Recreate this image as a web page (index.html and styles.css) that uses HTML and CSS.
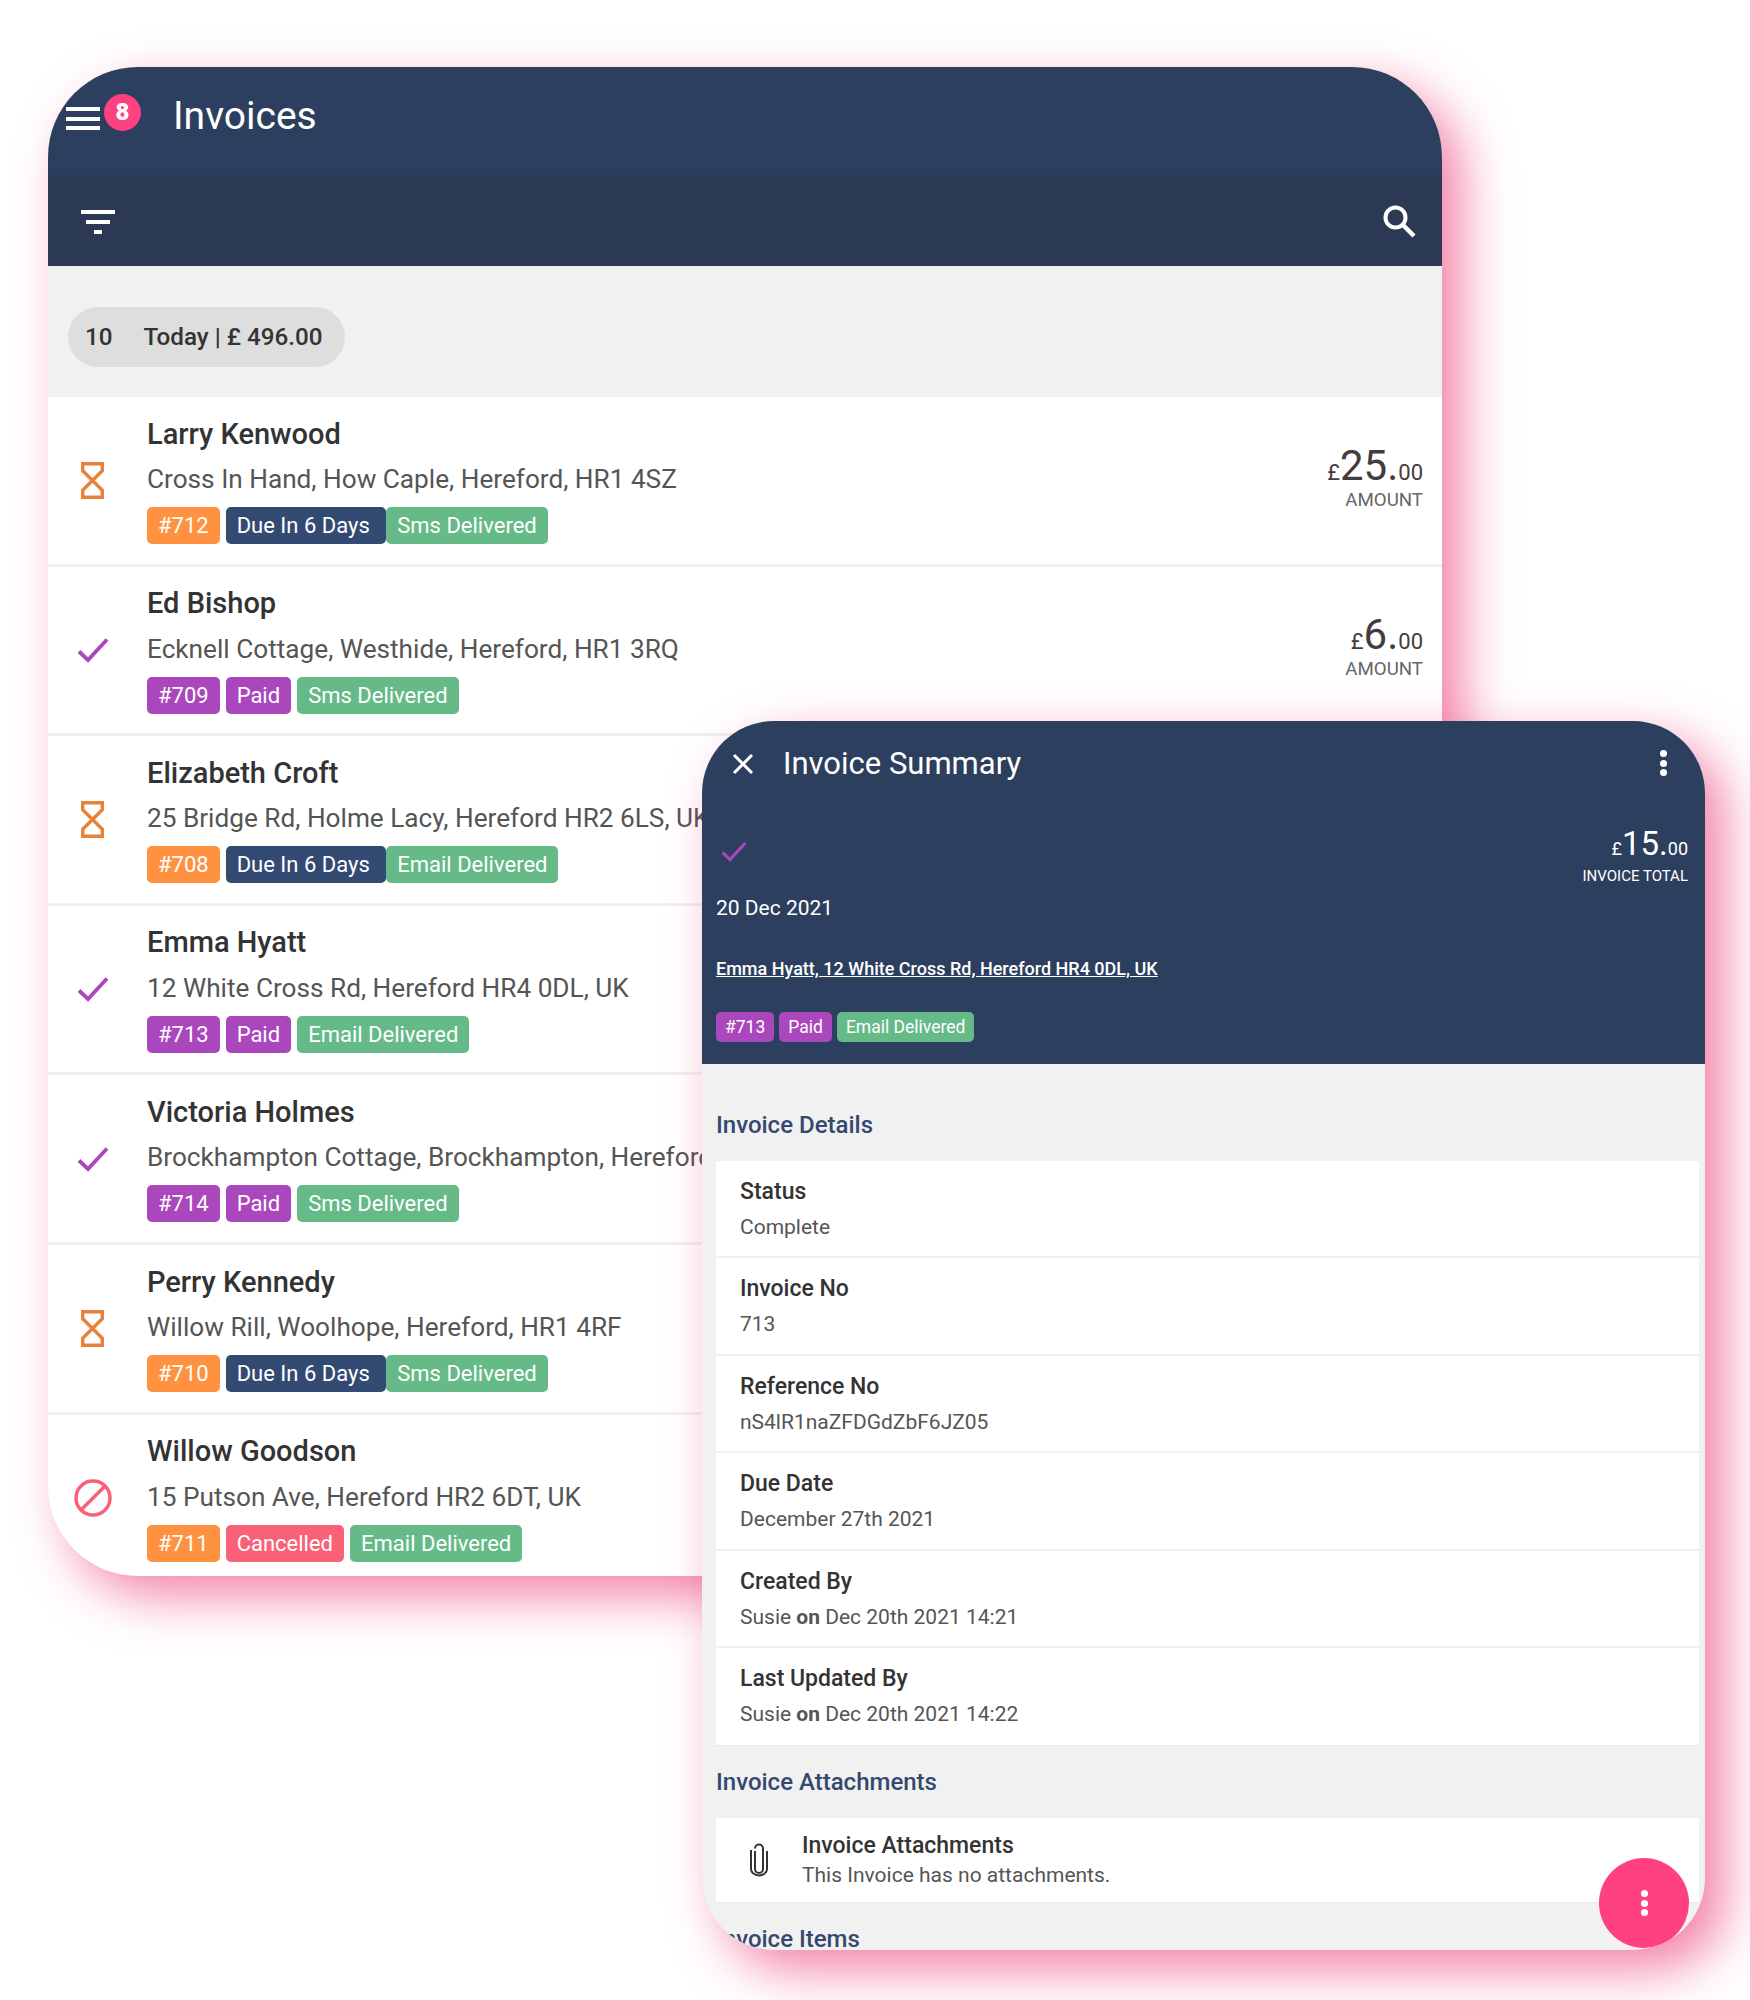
FILE: index.html
```html
<!DOCTYPE html>
<html lang="en">
<head>
    <meta charset="UTF-8">
    <meta name="viewport" content="width=device-width, initial-scale=1.0">
    <title>Invoices</title>
    <link rel="stylesheet" href="styles.css">
</head>
<body>
    <svg class="defs" width="0" height="0">
        <symbol id="hourglass" viewBox="0 0 23 37">
            <path d="M1.700 1.700h19.600v7l-19.600 19.600v7h19.600v-7L1.700 8.700z" fill="none" stroke="currentColor" stroke-width="3.400"/>
        </symbol>
        <symbol id="check" viewBox="0 0 32 26">
            <path d="M2 14.500 11 23 30 2.500" fill="none" stroke="currentColor" stroke-width="3.800"/>
        </symbol>
        <symbol id="cancel" viewBox="0 0 38 38">
            <circle cx="19" cy="19" r="17" fill="none" stroke="currentColor" stroke-width="3.500"/>
            <path d="M7 31 31 7" fill="none" stroke="currentColor" stroke-width="3.500"/>
        </symbol>
    </svg>

    <div class="canvas">
        <div class="window list-window">
            <div class="appbar">
                <div class="menu-icon"><span></span><span></span><span></span></div>
                <div class="count-badge">8</div>
                <h1>Invoices</h1>
            </div>
            <div class="toolbar">
                <div class="filter-icon"><span></span><span></span><span></span></div>
                <svg class="search-icon" viewBox="0 0 34 34" width="34" height="34">
                    <circle cx="13.500" cy="13.500" r="10" fill="none" stroke="#fff" stroke-width="4"/>
                    <path d="M21 21 32 32" fill="none" stroke="#fff" stroke-width="4.500"/>
                </svg>
            </div>
            <div class="summary">
                <div class="pill"><span>10</span><span>Today | £ 496.00</span></div>
            </div>

            <div class="row">
                <div class="status-cell"><svg class="status orange"><use href="#hourglass"/></svg></div>
                <div class="row-text">
                    <div class="name">Larry Kenwood</div>
                    <div class="address">Cross In Hand, How Caple, Hereford, HR1 4SZ</div>
                    <div class="tags">
                        <span class="tag bg-orange">#712</span>
                        <span class="tag bg-navy joined">Due In 6 Days</span>
                        <span class="tag bg-green">Sms Delivered</span>
                    </div>
                </div>
                <div class="amount">
                    <div class="price"><small>£</small>25.<small>00</small></div>
                    <div class="amount-label">AMOUNT</div>
                </div>
            </div>

            <div class="row">
                <div class="status-cell"><svg class="status tick purple"><use href="#check"/></svg></div>
                <div class="row-text">
                    <div class="name">Ed Bishop</div>
                    <div class="address">Ecknell Cottage, Westhide, Hereford, HR1 3RQ</div>
                    <div class="tags">
                        <span class="tag bg-purple">#709</span>
                        <span class="tag bg-purple">Paid</span>
                        <span class="tag bg-green">Sms Delivered</span>
                    </div>
                </div>
                <div class="amount">
                    <div class="price"><small>£</small>6.<small>00</small></div>
                    <div class="amount-label">AMOUNT</div>
                </div>
            </div>

            <div class="row">
                <div class="status-cell"><svg class="status orange"><use href="#hourglass"/></svg></div>
                <div class="row-text">
                    <div class="name">Elizabeth Croft</div>
                    <div class="address">25 Bridge Rd, Holme Lacy, Hereford HR2 6LS, UK</div>
                    <div class="tags">
                        <span class="tag bg-orange">#708</span>
                        <span class="tag bg-navy joined">Due In 6 Days</span>
                        <span class="tag bg-green">Email Delivered</span>
                    </div>
                </div>
            </div>

            <div class="row">
                <div class="status-cell"><svg class="status tick purple"><use href="#check"/></svg></div>
                <div class="row-text">
                    <div class="name">Emma Hyatt</div>
                    <div class="address">12 White Cross Rd, Hereford HR4 0DL, UK</div>
                    <div class="tags">
                        <span class="tag bg-purple">#713</span>
                        <span class="tag bg-purple">Paid</span>
                        <span class="tag bg-green">Email Delivered</span>
                    </div>
                </div>
            </div>

            <div class="row">
                <div class="status-cell"><svg class="status tick purple"><use href="#check"/></svg></div>
                <div class="row-text">
                    <div class="name">Victoria Holmes</div>
                    <div class="address">Brockhampton Cottage, Brockhampton, Hereford</div>
                    <div class="tags">
                        <span class="tag bg-purple">#714</span>
                        <span class="tag bg-purple">Paid</span>
                        <span class="tag bg-green">Sms Delivered</span>
                    </div>
                </div>
            </div>

            <div class="row">
                <div class="status-cell"><svg class="status orange"><use href="#hourglass"/></svg></div>
                <div class="row-text">
                    <div class="name">Perry Kennedy</div>
                    <div class="address">Willow Rill, Woolhope, Hereford, HR1 4RF</div>
                    <div class="tags">
                        <span class="tag bg-orange">#710</span>
                        <span class="tag bg-navy joined">Due In 6 Days</span>
                        <span class="tag bg-green">Sms Delivered</span>
                    </div>
                </div>
            </div>

            <div class="row">
                <div class="status-cell"><svg class="status circle red"><use href="#cancel"/></svg></div>
                <div class="row-text">
                    <div class="name">Willow Goodson</div>
                    <div class="address">15 Putson Ave, Hereford HR2 6DT, UK</div>
                    <div class="tags">
                        <span class="tag bg-orange">#711</span>
                        <span class="tag bg-red">Cancelled</span>
                        <span class="tag bg-green">Email Delivered</span>
                    </div>
                </div>
            </div>
        </div>

        <div class="window summary-window">
            <div class="summary-head">
                <div class="summary-bar">
                    <svg class="close-icon" viewBox="0 0 22 22" width="22" height="22">
                        <path d="M2 2 20 20M20 2 2 20" fill="none" stroke="#fff" stroke-width="3"/>
                    </svg>
                    <h2>Invoice Summary</h2>
                    <div class="dots"><span></span><span></span><span></span></div>
                </div>
                <div class="total-line">
                    <svg class="head-tick purple"><use href="#check"/></svg>
                    <div class="total">
                        <div class="price"><small>£</small>15.<small>00</small></div>
                        <div class="total-label">INVOICE TOTAL</div>
                    </div>
                </div>
                <div class="head-date">20 Dec 2021</div>
                <a class="head-link">Emma Hyatt, 12 White Cross Rd, Hereford HR4 0DL, UK</a>
                <div class="tags small-tags">
                    <span class="tag bg-purple">#713</span>
                    <span class="tag bg-purple">Paid</span>
                    <span class="tag bg-green">Email Delivered</span>
                </div>
            </div>

            <div class="summary-body">
                <h3 class="first-heading">Invoice Details</h3>
                <div class="panel">
                    <div class="detail">
                        <div class="detail-label">Status</div>
                        <div class="detail-value">Complete</div>
                    </div>
                    <div class="detail">
                        <div class="detail-label">Invoice No</div>
                        <div class="detail-value">713</div>
                    </div>
                    <div class="detail">
                        <div class="detail-label">Reference No</div>
                        <div class="detail-value">nS4lR1naZFDGdZbF6JZ05</div>
                    </div>
                    <div class="detail">
                        <div class="detail-label">Due Date</div>
                        <div class="detail-value">December 27th 2021</div>
                    </div>
                    <div class="detail">
                        <div class="detail-label">Created By</div>
                        <div class="detail-value">Susie <b>on</b> Dec 20th 2021 14:21</div>
                    </div>
                    <div class="detail">
                        <div class="detail-label">Last Updated By</div>
                        <div class="detail-value">Susie <b>on</b> Dec 20th 2021 14:22</div>
                    </div>
                </div>

                <h3>Invoice Attachments</h3>
                <div class="panel attachment">
                    <svg class="clip-icon" viewBox="0 0 20 34" width="20" height="34">
                        <path d="M6 8v18a4 4 0 0 0 8 0V5.500a4 4 0 0 0-8 0M2 7v19a8 6.500 0 0 0 16 0V8" fill="none" stroke="#333" stroke-width="2"/>
                    </svg>
                    <div>
                        <div class="detail-label">Invoice Attachments</div>
                        <div class="attachment-note">This Invoice has no attachments.</div>
                    </div>
                </div>

                <h3>Invoice Items</h3>
            </div>

            <div class="fab"><div class="dots"><span></span><span></span><span></span></div></div>
        </div>
    </div>
</body>
</html>
```

FILE: styles.css
```css
* {
    box-sizing: border-box;
}
body {
    margin: 0;
    background: #fff;
    font-family: Roboto, Arial, sans-serif;
    color: #333;
}
.defs {
    display: block;
    height: 0;
}
.canvas {
    position: relative;
    height: 2000px;
    overflow: hidden;
}
.window {
    position: absolute;
    overflow: hidden;
    background: #fff;
    box-shadow: 20px 20px 50px rgba(236, 64, 122, 0.65);
}
.list-window {
    left: 48px;
    top: 67px;
    width: 1394px;
    height: 1509px;
    border-radius: 90px;
}
.summary-window {
    left: 702px;
    top: 721px;
    width: 1003px;
    height: 1229px;
    border-radius: 72px;
    background: #f1f1f1;
}

/* list window */
.appbar {
    height: 108px;
    background: #2d3f5e;
    display: flex;
    align-items: center;
    padding-left: 18px;
    color: #fff;
}
.appbar h1 {
    margin: -10px 0 0 32px;
    font-size: 39px;
    font-weight: 400;
}
.menu-icon {
    width: 34px;
    display: flex;
    flex-direction: column;
    gap: 5.500px;
    margin-top: -5px;
}
.menu-icon span, .filter-icon span {
    display: block;
    height: 4px;
    background: #fff;
}
.count-badge {
    width: 37px;
    height: 37px;
    margin: -17px 0 0 4px;
    border-radius: 50%;
    background: #ff4081;
    color: #fff;
    font-size: 24px;
    font-weight: 900;
    line-height: 37px;
    text-align: center;
}
.toolbar {
    height: 91px;
    background: #2b3955;
    display: flex;
    align-items: center;
    justify-content: space-between;
    padding: 0 26px 0 33px;
}
.filter-icon {
    width: 34px;
    display: flex;
    flex-direction: column;
    align-items: center;
    gap: 6px;
    margin-top: 3px;
}
.filter-icon span:nth-child(1) { width: 34px; }
.filter-icon span:nth-child(2) { width: 24px; }
.filter-icon span:nth-child(3) { width: 8px; }
.summary {
    height: 131px;
    background: #f1f1f1;
    padding: 41px 0 0 20px;
}
.pill {
    display: inline-flex;
    align-items: center;
    gap: 31px;
    height: 60px;
    padding: 0 23px 0 17px;
    border-radius: 30px;
    background: #dedede;
    font-size: 24.200px;
    font-weight: 500;
}
.row {
    height: 169.600px;
    border-bottom: 3px solid #f0f0f0;
    display: flex;
    align-items: center;
    padding-right: 19px;
}
.status-cell {
    flex: none;
    width: 99px;
    display: flex;
    justify-content: center;
    padding-right: 10px;
}
.status {
    width: 23px;
    height: 37px;
}
.status.tick {
    width: 32px;
    height: 26px;
}
.status.circle {
    width: 38px;
    height: 38px;
}
.orange { color: #e8823a; }
.purple { color: #ab47bc; }
.red { color: #f96177; }
.row-text {
    flex: 1;
    margin-bottom: 3px;
    white-space: nowrap;
}
.name {
    font-size: 29px;
    font-weight: 500;
    line-height: 40px;
}
.address {
    margin-top: 5.500px;
    font-size: 26.200px;
    line-height: 40px;
    color: #555;
}
.tags {
    display: flex;
    gap: 6px;
    margin-top: 8px;
}
.tag {
    height: 37px;
    padding: 0 11px;
    border-radius: 5px;
    color: #fff;
    font-size: 22px;
    line-height: 37px;
}
.tag.joined {
    margin-right: -6px;
    padding-right: 16.500px;
}
.bg-orange { background: #ff9240; }
.bg-navy { background: #334a72; }
.bg-green { background: #65ba87; }
.bg-purple { background: #ab47bc; }
.bg-red { background: #f96177; }
.amount {
    margin-bottom: 7.500px;
    text-align: right;
    white-space: nowrap;
}
.price {
    color: #443c3c;
    font-size: 42px;
    line-height: 42px;
}
.price small {
    font-size: 22px;
}
.amount-label {
    margin-top: -3px;
    color: #666;
    font-size: 18.700px;
    line-height: 18px;
}

/* summary window */
.summary-head {
    height: 343px;
    background: #2d3f5e;
    color: #fff;
    padding: 0 14px;
}
.summary-bar {
    display: flex;
    align-items: center;
    height: 84px;
    padding-left: 16px;
}
.close-icon {
    margin-top: 2px;
}
.summary-bar h2 {
    flex: 1;
    margin: 0 0 0 29px;
    font-size: 31px;
    font-weight: 400;
}
.dots {
    display: flex;
    flex-direction: column;
    gap: 2.500px;
}
.dots span {
    display: block;
    width: 7px;
    height: 7px;
    border-radius: 50%;
    background: #fff;
}
.summary-bar .dots {
    margin-right: 24px;
}
.total-line {
    display: flex;
    justify-content: space-between;
    align-items: flex-start;
    height: 78px;
    padding-right: 3px;
}
.head-tick {
    width: 28px;
    height: 21px;
    margin: 36px 0 0 4px;
}
.total {
    text-align: right;
    margin-top: 21px;
}
.total .price {
    color: #fff;
    font-size: 33px;
    line-height: 36px;
}
.total .price small {
    font-size: 18px;
}
.total-label {
    margin-top: -1px;
    font-size: 15px;
    line-height: 20px;
}
.head-date {
    margin-top: 10px;
    font-size: 21px;
    line-height: 30px;
}
.head-link {
    display: block;
    margin-top: 31px;
    color: #fff;
    font-size: 18px;
    font-weight: 500;
    line-height: 30px;
    text-decoration: underline;
}
.small-tags {
    gap: 5px;
    margin-top: 28px;
}
.small-tags .tag {
    height: 30px;
    padding: 0 9px;
    font-size: 17.500px;
    line-height: 30px;
}
.summary-body {
    padding: 0 6px 0 14px;
}
.summary-body h3 {
    margin: 0;
    height: 73px;
    color: #34496f;
    font-size: 24px;
    font-weight: 500;
    line-height: 75px;
}
.summary-body h3.first-heading {
    height: 97px;
    line-height: 122px;
}
.panel {
    background: #fff;
    box-shadow: 0 1px 1px rgba(0, 0, 0, 0.03);
}
.detail {
    height: 97.400px;
    padding: 16px 24px 0;
    border-bottom: 2px solid #f0f0f0;
}
.detail:last-child {
    border-bottom: 0;
}
.detail-label {
    font-size: 23px;
    font-weight: 500;
    line-height: 30px;
}
.detail-value {
    margin-top: 5px;
    color: #555;
    font-size: 21px;
    line-height: 30px;
}
.attachment {
    display: flex;
    align-items: center;
    height: 84px;
    padding-left: 33px;
    gap: 33px;
}
.attachment .detail-label {
    margin-top: 0;
}
.attachment-note {
    margin-top: -1px;
    color: #555;
    font-size: 21px;
    line-height: 30px;
}
.fab {
    position: absolute;
    right: 16px;
    bottom: 2px;
    width: 90px;
    height: 90px;
    border-radius: 50%;
    background: #ff4081;
    display: flex;
    align-items: center;
    justify-content: center;
}
```
